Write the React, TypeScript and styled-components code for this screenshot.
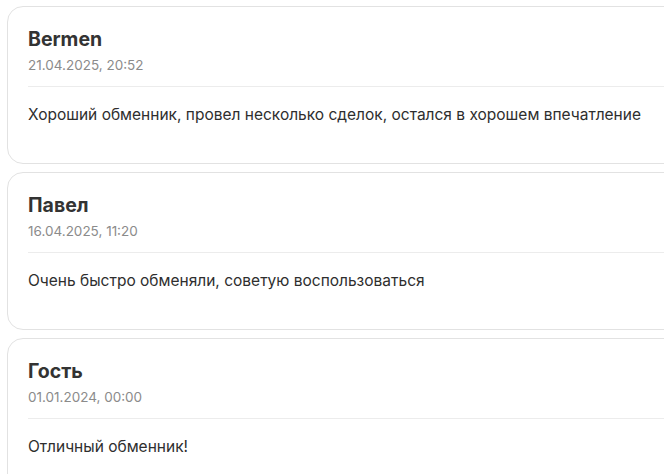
import React from "react";
import styled, { createGlobalStyle } from "styled-components";

const Global = createGlobalStyle`
  html, body {
    margin: 0;
    padding: 0;
    background: #fff;
    overflow: hidden;
    font-family: "Inter", "Noto Sans", sans-serif;
  }
`;

const List = styled.div`
  display: flex;
  flex-direction: column;
  gap: 8px;
  padding: 6px 0 0 7px;
`;

const Card = styled.div`
  width: 720px;
  box-sizing: border-box;
  border: 1px solid #e2e2e2;
  border-radius: 16px;
  padding: 20px 20px 37px;
  background: #fff;
`;

const Name = styled.div`
  font-size: 19.5px;
  line-height: 24px;
  font-weight: 700;
  color: #333;
`;

const Date = styled.div`
  margin-top: 4px;
  font-size: 13.5px;
  line-height: 20px;
  color: #8b8b8b;
`;

const Divider = styled.div`
  height: 1px;
  background: #ececec;
  margin: 11px 0 16px;
`;

const Text = styled.div`
  font-size: 15.5px;
  line-height: 23px;
  color: #2e2e2e;
`;

const reviews = [
  {
    name: "Bermen",
    date: "21.04.2025, 20:52",
    text: "Хороший обменник, провел несколько сделок, остался в хорошем впечатление",
  },
  {
    name: "Павел",
    date: "16.04.2025, 11:20",
    text: "Очень быстро обменяли, советую воспользоваться",
  },
  {
    name: "Гость",
    date: "01.01.2024, 00:00",
    text: "Отличный обменник!",
  },
];

const App = () => {
  return (
    <>
      <Global />
      <List>
        {reviews.map((r) => (
          <Card key={r.name}>
            <Name>{r.name}</Name>
            <Date>{r.date}</Date>
            <Divider />
            <Text>{r.text}</Text>
          </Card>
        ))}
      </List>
    </>
  );
};

export default App;
